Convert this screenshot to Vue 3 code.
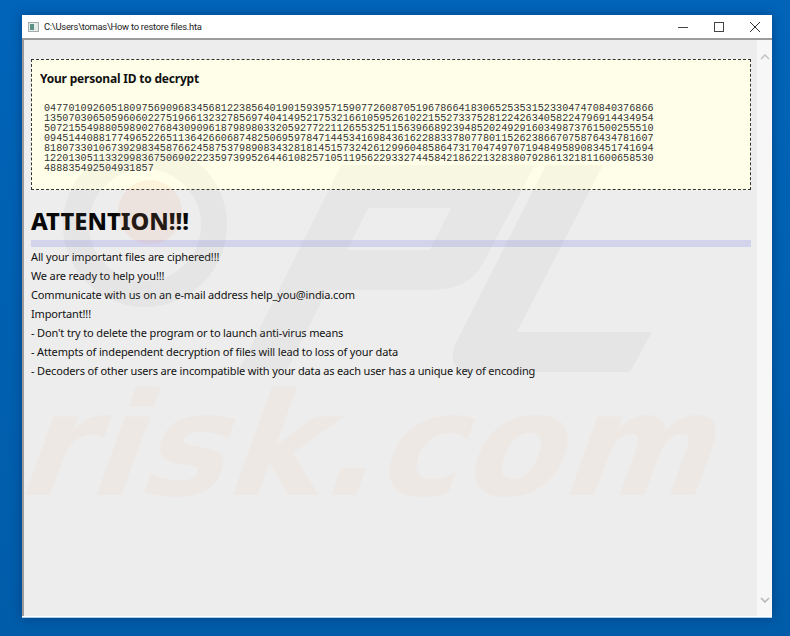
<script setup>
const idLines = [
  '0477010926051809756909683456812238564019015939571590772608705196786641830652535315233047470840376866',
  '1350703065059606022751966132327856974041495217532166105952610221552733752812242634058224796914434954',
  '5072155498805989027684309096187989803320592772211265532511563966892394852024929160349873761500255510',
  '0945144088177496522651136426606874825069597847144534169843616228833780778011526238667075876434781607',
  '8180733010673929834587662458753798908343281814515732426129960485864731704749707194849589083451741694',
  '1220130511332998367506902223597399526446108257105119562293327445842186221328380792861321811600658530',
  '488835492504931857',
]

const messages = [
  'All your important files are ciphered!!!',
  'We are ready to help you!!!',
  'Communicate with us on an e-mail address help_you@india.com',
  'Important!!!',
  "- Don't try to delete the program or to launch anti-virus means",
  '- Attempts of independent decryption of files will lead to loss of your data',
  '- Decoders of other users are incompatible with your data as each user has a unique key of encoding',
]
</script>

<template>
  <div class="desktop">
    <div class="window">
      <header class="titlebar">
        <svg class="app-icon" width="11" height="10" viewBox="0 0 11 10" aria-hidden="true">
          <rect x="0.5" y="0.5" width="10" height="9" fill="#e6ecea" stroke="#a3adad" />
          <rect x="2" y="2" width="4" height="6" fill="#5b9186" />
        </svg>
        <span class="titlebar__text">C:\Users\tomas\How to restore files.hta</span>
        <div class="titlebar__controls">
          <svg width="10" height="10" viewBox="0 0 10 10" aria-hidden="true">
            <path d="M0 5.5h10" stroke="#444" fill="none" />
          </svg>
          <svg width="10" height="10" viewBox="0 0 10 10" aria-hidden="true">
            <rect x="0.5" y="0.5" width="9" height="9" stroke="#444" fill="none" />
          </svg>
          <svg width="10" height="10" viewBox="0 0 10 10" aria-hidden="true">
            <path d="M0 0l10 10M10 0L0 10" stroke="#333" fill="none" />
          </svg>
        </div>
      </header>
      <div class="body">
        <main class="content">
          <section class="id-box">
            <h2 class="id-box__title">Your personal ID to decrypt</h2>
            <div class="id-box__digits">
              <div v-for="line in idLines" :key="line">{{ line }}</div>
            </div>
          </section>
          <h1 class="heading">ATTENTION!!!</h1>
          <div class="rule"></div>
          <p v-for="msg in messages" :key="msg" class="message">{{ msg }}</p>
        </main>
        <aside class="scrollbar">
          <svg width="10" height="6" viewBox="0 0 10 6" aria-hidden="true">
            <path d="M1 5l4-4 4 4" stroke="#c6c6c6" stroke-width="1.6" fill="none" />
          </svg>
          <svg width="10" height="6" viewBox="0 0 10 6" aria-hidden="true">
            <path d="M1 1l4 4 4-4" stroke="#b8b8b8" stroke-width="1.6" fill="none" />
          </svg>
        </aside>
      </div>
    </div>

    <div class="watermark" aria-hidden="true">
      <svg class="watermark__logo" width="790" height="636" viewBox="0 0 790 636">
        <circle cx="145" cy="225" r="69" fill="none" stroke="#8a8a8a" stroke-width="26" opacity="0.08" />
        <circle cx="150" cy="212" r="32" fill="#f0a070" opacity="0.12" />
        <path
          fill-rule="evenodd"
          d="M341 165H535L482 265Q468 290 430 290H327L287 370H239L320 208ZM368 208L347 250H430L451 208Z"
          fill="#8a8a8a"
          opacity="0.07"
        />
        <path d="M546 165H603L517 332H652L630 372H475Q445 372 455 345Z" fill="#8a8a8a" opacity="0.08" />
      </svg>
      <span class="watermark__text">risk.com</span>
    </div>
  </div>
</template>

<style>
html,
body {
  margin: 0;
  background: #0160b2;
}
</style>

<style scoped>
.desktop {
  position: relative;
  width: 790px;
  height: 636px;
  padding: 15px 18px 18px 22px;
  box-sizing: border-box;
  overflow: hidden;
  background: linear-gradient(to bottom, #0164b8, #005ca9);
}

.window {
  height: 100%;
  display: flex;
  flex-direction: column;
  background: #fff;
  box-shadow: 0 0 10px rgba(0, 30, 80, 0.45);
  box-sizing: border-box;
  padding-bottom: 1px;
  border-bottom: 1px solid #a9cdeb;
}

.titlebar {
  height: 25px;
  box-sizing: border-box;
  flex: none;
  display: flex;
  align-items: center;
  padding-left: 6px;
  border-bottom: 2px solid #9b9b9b;
  font-family: Roboto, sans-serif;
  color: #222;
}

.app-icon {
  margin-right: 5px;
}

.titlebar__text {
  font-size: 9.4px;
  letter-spacing: -0.25px;
}

.titlebar__controls {
  margin-left: auto;
  display: flex;
  gap: 26px;
  padding-right: 12px;
}

.body {
  flex: 1;
  min-height: 0;
  display: flex;
  border-left: 2px solid #9b9b9b;
}

.content {
  flex: 1;
  min-width: 0;
  background: #ededed;
  padding: 19px 6px 0 7px;
  font-family: "Noto Sans", sans-serif;
  color: #111;
}

.scrollbar {
  flex: none;
  width: 15px;
  background: #f7f7f7;
  display: flex;
  flex-direction: column;
  justify-content: space-between;
  align-items: center;
  padding: 14px 0 13px;
  box-sizing: border-box;
}

.id-box {
  height: 131px;
  box-sizing: border-box;
  border: 1px dashed #333;
  background: #ffffe9;
  padding: 11px 8px;
}

.id-box__title {
  margin: 0 0 17px;
  font-size: 12px;
  letter-spacing: -0.2px;
  line-height: 16px;
  font-weight: 700;
}

.id-box__digits {
  padding-left: 4px;
  font: 10.15px/10px "Liberation Mono", monospace;
  letter-spacing: 0.02px;
  color: #333;
}

.heading {
  margin: 17px 0 0;
  font-size: 23.7px;
  line-height: 28px;
  font-weight: 800;
  color: #080808;
}

.rule {
  height: 7px;
  margin: 5px 0 0;
  background: #d3d3ec;
}

.message {
  margin: 0;
  height: 19px;
  font-size: 11px;
  letter-spacing: -0.15px;
  line-height: 19px;
  white-space: nowrap;
}

.watermark {
  position: absolute;
  inset: 0;
  pointer-events: none;
  overflow: hidden;
}

.watermark__logo {
  position: absolute;
  left: 0;
  top: 0;
}

.watermark__text {
  position: absolute;
  left: 10px;
  top: 389px;
  font: 700 143px/0.8 "DejaVu Sans", sans-serif;
  letter-spacing: 1px;
  color: rgba(255, 185, 145, 0.09);
  white-space: nowrap;
  transform: skewX(-20deg);
  transform-origin: left bottom;
}
</style>
